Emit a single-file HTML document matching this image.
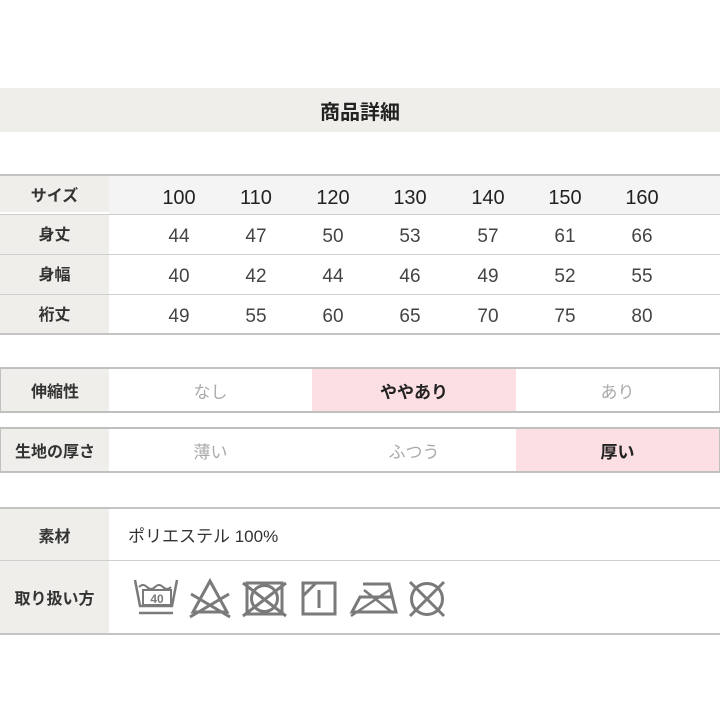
<!DOCTYPE html>
<html><head><meta charset="utf-8"><style>
body{margin:0;width:720px;height:720px;background:#fff;position:relative;overflow:hidden;font-family:"Liberation Sans","Noto Sans CJK JP",sans-serif;color:#333}
.a{position:absolute}
.lbl{position:absolute;left:0;width:109px;background:#efeeea;font-weight:bold;font-size:16px;color:#333;display:flex;align-items:center;justify-content:center}
.ln{position:absolute;left:0;width:720px;height:2px;background:#c4c4c4}
.hl{position:absolute;left:0;width:720px;height:1px;background:#cfcfcf}
.num{position:absolute;width:60px;text-align:center;font-size:19px;color:#444}
.c{position:absolute;display:flex;align-items:center;justify-content:center;font-size:17px}
.box{position:absolute;left:0;width:718px;border:1px solid #c0c0c0;border-width:2px 1px 2px 1px}
</style></head><body>
<div class="a" style="left:0;top:88px;width:720px;height:44px;background:#efeeea;display:flex;align-items:center;justify-content:center;font-weight:bold;font-size:20px;color:#222">商品詳細</div>

<div class="a" style="left:109px;top:176px;width:611px;height:38px;background:#f4f4f4"></div>
<div class="lbl" style="top:176px;height:36px">サイズ</div>
<div class="lbl" style="top:215px;height:39px;padding-bottom:4px;box-sizing:border-box">身丈</div>
<div class="lbl" style="top:255px;height:39px;padding-bottom:4px;box-sizing:border-box">身幅</div>
<div class="lbl" style="top:295px;height:39px;padding-bottom:4px;box-sizing:border-box">裄丈</div>
<div class="ln" style="top:174px"></div>
<div class="hl" style="top:214px"></div>
<div class="hl" style="top:254px"></div>
<div class="hl" style="top:294px"></div>
<div class="ln" style="top:333px"></div>
<div id="nums"></div>

<div class="box" style="top:367px;height:42px"></div>
<div class="lbl" style="top:369px;left:1px;width:108px;height:42px">伸縮性</div>
<div class="c" style="top:369px;left:109px;width:203px;height:42px;color:#aaa">なし</div>
<div class="c" style="top:369px;left:312px;width:204px;height:42px;background:#fbdfe3;color:#222;font-weight:bold">ややあり</div>
<div class="c" style="top:369px;left:516px;width:203px;height:42px;color:#aaa">あり</div>

<div class="box" style="top:427px;height:42px"></div>
<div class="lbl" style="top:429px;left:1px;width:108px;height:42px">生地の厚さ</div>
<div class="c" style="top:429px;left:109px;width:203px;height:42px;color:#aaa">薄い</div>
<div class="c" style="top:429px;left:312px;width:204px;height:42px;color:#aaa">ふつう</div>
<div class="c" style="top:429px;left:516px;width:203px;height:42px;background:#fbdfe3;color:#222;font-weight:bold">厚い</div>

<div class="ln" style="top:507px"></div>
<div class="lbl" style="top:509px;height:51px">素材</div>
<div class="a" style="left:128px;top:522px;font-size:17px;color:#333">ポリエステル 100%</div>
<div class="hl" style="top:560px"></div>
<div class="lbl" style="top:561px;height:72px">取り扱い方</div>
<div class="ln" style="top:633px"></div>

<svg class="a" style="left:0;top:0" width="720" height="720" fill="none" stroke="#7a7a7a" stroke-width="3">
<path d="M135 580 L140 606 L172 606 L177 580" stroke-width="2.5"/>
<path d="M139 587 q4 -4 8 0 t8 0 t8 0 t8 0" stroke-width="2"/>
<rect x="143" y="590" width="28" height="15" stroke-width="2"/>
<text x="157" y="603" font-size="12" font-weight="bold" fill="#7a7a7a" stroke="none" text-anchor="middle" font-family="Liberation Sans">40</text>
<path d="M139 613 H173" stroke-width="2.5"/>
<path d="M210 581 L193 612 H227 Z"/>
<path d="M191 594 L230 617 M229 594 L190 617"/>
<rect x="247" y="583" width="35" height="31"/>
<circle cx="264.5" cy="598.5" r="13"/>
<path d="M243 583 L286 616 M286 583 L243 616"/>
<rect x="303" y="583" width="32" height="31"/>
<path d="M303 596 L316 583 M319 590 V608"/>
<path d="M363 584 H389 L396 612 H352 L360 597 H391"/>
<path d="M351 616 L391 589 M364 590 L393 613" stroke-width="2.5"/>
<circle cx="427" cy="599" r="15.5"/>
<path d="M410 582 L444 616 M444 582 L410 616"/>
</svg>
<script>
var cols=[179,256,333,410,488,565,642];
var rows=[[176,["100","110","120","130","140","150","160"]],[214,["44","47","50","53","57","61","66"]],[254,["40","42","44","46","49","52","55"]],[294,["49","55","60","65","70","75","80"]]];
var h="";
rows.forEach(function(r,i){r[1].forEach(function(t,j){h+='<div class="num" style="left:'+(cols[j]-30)+'px;top:'+(r[0]+(i==0?11:12))+'px;'+(i==0?'color:#222;font-size:20px;':'')+'">'+t+'</div>';});});
document.getElementById("nums").innerHTML=h;
</script>
</body></html>
